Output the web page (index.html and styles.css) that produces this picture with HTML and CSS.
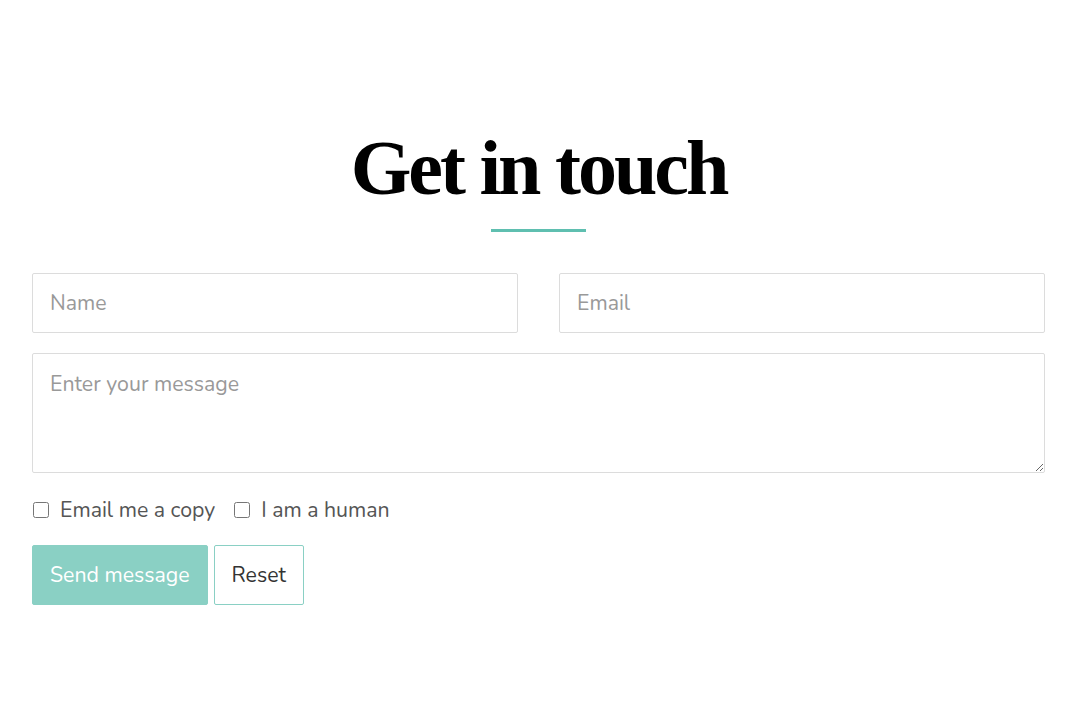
FILE: index.html
```html
<!DOCTYPE html>
<html>
<head>
<meta charset="utf-8">
<link rel="stylesheet" href="styles.css">
</head>
<body>
<main class="page">
  <h1 class="title">Get in touch</h1>
  <div class="divider"></div>
  <form class="form">
    <div class="row">
      <input class="field" type="text" placeholder="Name">
      <input class="field" type="text" placeholder="Email">
    </div>
    <textarea class="field area" placeholder="Enter your message"></textarea>
    <div class="checks">
      <label class="check"><input type="checkbox"> Email me a copy</label>
      <label class="check"><input type="checkbox"> I am a human</label>
    </div>
    <div class="buttons">
      <button type="button" class="btn primary">Send message</button>
      <button type="button" class="btn secondary">Reset</button>
    </div>
  </form>
</main>
</body>
</html>
```
FILE: styles.css
```css
* { box-sizing: border-box; }
html, body { margin: 0; background: #fff; }
body { font-family: "Nunito", "Lato", "Open Sans", sans-serif; }
.page { padding: 128px 33px 0 32px; display: flex; flex-direction: column; }
.title {
  margin: 0;
  text-align: center;
  font-family: "Liberation Serif", "Times New Roman", serif;
  font-weight: 700;
  font-size: 78px;
  line-height: 80px;
  letter-spacing: -3px;
  color: #000;
}
.divider { width: 95px; height: 3px; background: #5fbfb0; margin: 21px auto 0; }
.form { margin-top: 41px; display: flex; flex-direction: column; }
.row { display: grid; grid-template-columns: 1fr 1fr; gap: 41px; }
.field {
  height: 60px;
  border: 1px solid #dcdcdc;
  border-radius: 2px;
  padding: 0 17px;
  font-family: inherit;
  font-size: 21.3px;
  color: #333;
  outline: none;
  background: #fff;
}
.field::placeholder { color: #999; }
.area { margin-top: 20px; height: 120px; padding: 15px 17px; resize: vertical; }
.checks { display: flex; gap: 18px; margin-top: 22px; }
.check { display: flex; align-items: center; font-size: 21.3px; color: #555; }
.check input { width: 16px; height: 16px; margin: 0 11px 0 1px; }
.buttons { display: flex; gap: 6px; margin-top: 20px; }
.btn { height: 60px; font-family: inherit; font-size: 21.3px; border-radius: 2px; padding: 0 17px; }
.primary { background: #8ad0c4; border: 1px solid #8ad0c4; color: #fff; }
.secondary { background: #fff; border: 1px solid #8ad0c4; color: #333; }
```
